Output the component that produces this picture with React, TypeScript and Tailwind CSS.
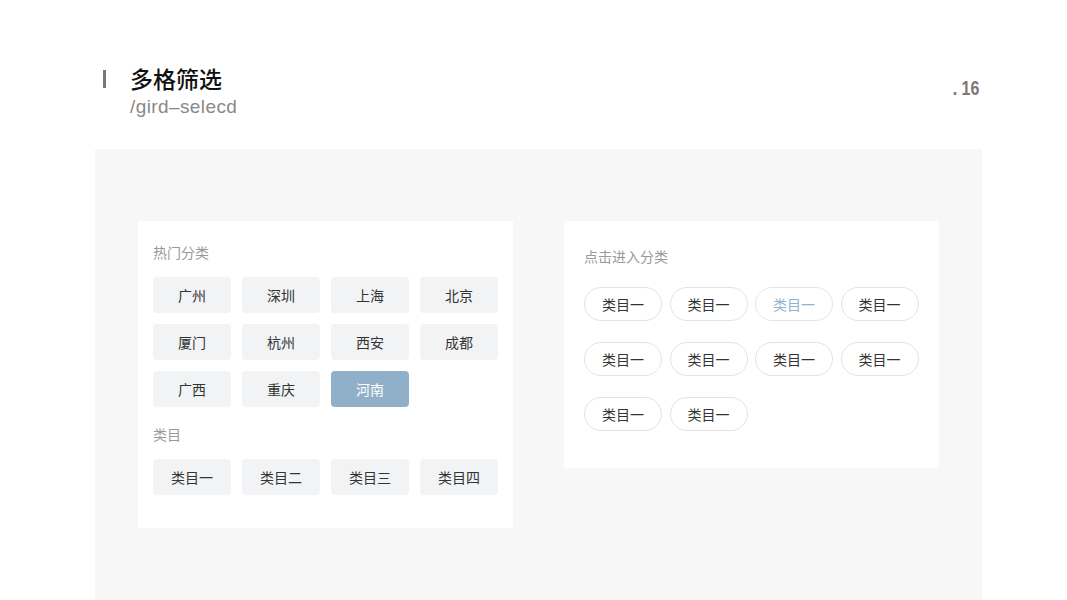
import React from 'react';

const cities = ['广州', '深圳', '上海', '北京', '厦门', '杭州', '西安', '成都', '广西', '重庆', '河南'];
const cats = ['类目一', '类目二', '类目三', '类目四'];
const pills = Array.from({ length: 10 }, (_, i) => ({ label: '类目一', active: i === 2 }));

const font = { fontFamily: '"Noto Sans CJK SC", "Noto Sans", sans-serif' };

function Tile({ label, active = false }: { label: string; active?: boolean }) {
  return (
    <div
      className={
        'w-[78px] h-[36px] rounded-[4px] flex items-center justify-center text-[14px] ' +
        (active ? 'bg-[#8fb0c8] text-white' : 'bg-[#f2f3f5] text-[#333]')
      }
    >
      {label}
    </div>
  );
}

export default function App() {
  return (
    <div className="w-[1067px] h-[600px] bg-white overflow-hidden" style={font}>
      {/* Header */}
      <div className="flex items-start pt-[62px] pl-[103px] pr-[88px] h-[149px]">
        <div className="w-[3px] h-[18px] bg-[#777] mt-[8px] mr-[24px]" />
        <div className="flex flex-col">
          <h1 className="text-[23px] leading-[32px] font-medium text-[#111]">多格筛选</h1>
          <div
            className="text-[19px] leading-[24px] text-[#888] mt-[1px] tracking-[0.4px]"
            style={{ fontFamily: '"Liberation Sans", Arial, sans-serif' }}
          >
            /gird–selecd
          </div>
        </div>
        <div
          className="ml-auto mt-[11px] text-[20px] font-bold text-[#7a7a7a] inline-block scale-x-[0.8] origin-right"
          style={{ fontFamily: '"Liberation Sans", Arial, sans-serif' }}
        >
          . 16
        </div>
      </div>

      {/* Gray panel */}
      <div className="ml-[95px] w-[887px] h-[451px] bg-[#f7f7f7] flex items-start gap-[51px] pt-[72px] pl-[43px]">
        {/* Left card */}
        <div className="w-[375px] bg-white pt-[21px] pb-[33px] px-[15px]">
          <div className="text-[14px] leading-[20px] text-[#999]">热门分类</div>
          <div className="mt-[15px] grid grid-cols-4 gap-[11px] w-[345px]">
            {cities.map((c) => (
              <Tile key={c} label={c} active={c === '河南'} />
            ))}
          </div>
          <div className="mt-[17px] text-[14px] leading-[20px] text-[#999]">类目</div>
          <div className="mt-[15px] grid grid-cols-4 gap-[11px] w-[345px]">
            {cats.map((c) => (
              <Tile key={c} label={c} />
            ))}
          </div>
        </div>

        {/* Right card */}
        <div className="w-[375px] bg-white pt-[25px] pb-[37px] px-[20px]">
          <div className="text-[14px] leading-[20px] text-[#999]">点击进入分类</div>
          <div className="mt-[21px] flex flex-wrap gap-x-[7.5px] gap-y-[21px] w-[340px]">
            {pills.map((p, i) => (
              <div
                key={i}
                className={
                  'w-[78px] h-[34px] rounded-full border flex items-center justify-center text-[14px] ' +
                  (p.active ? 'border-[#dfe7ee] text-[#8fb3d0]' : 'border-[#e3e3e3] text-[#333]')
                }
              >
                {p.label}
              </div>
            ))}
          </div>
        </div>
      </div>
    </div>
  );
}
